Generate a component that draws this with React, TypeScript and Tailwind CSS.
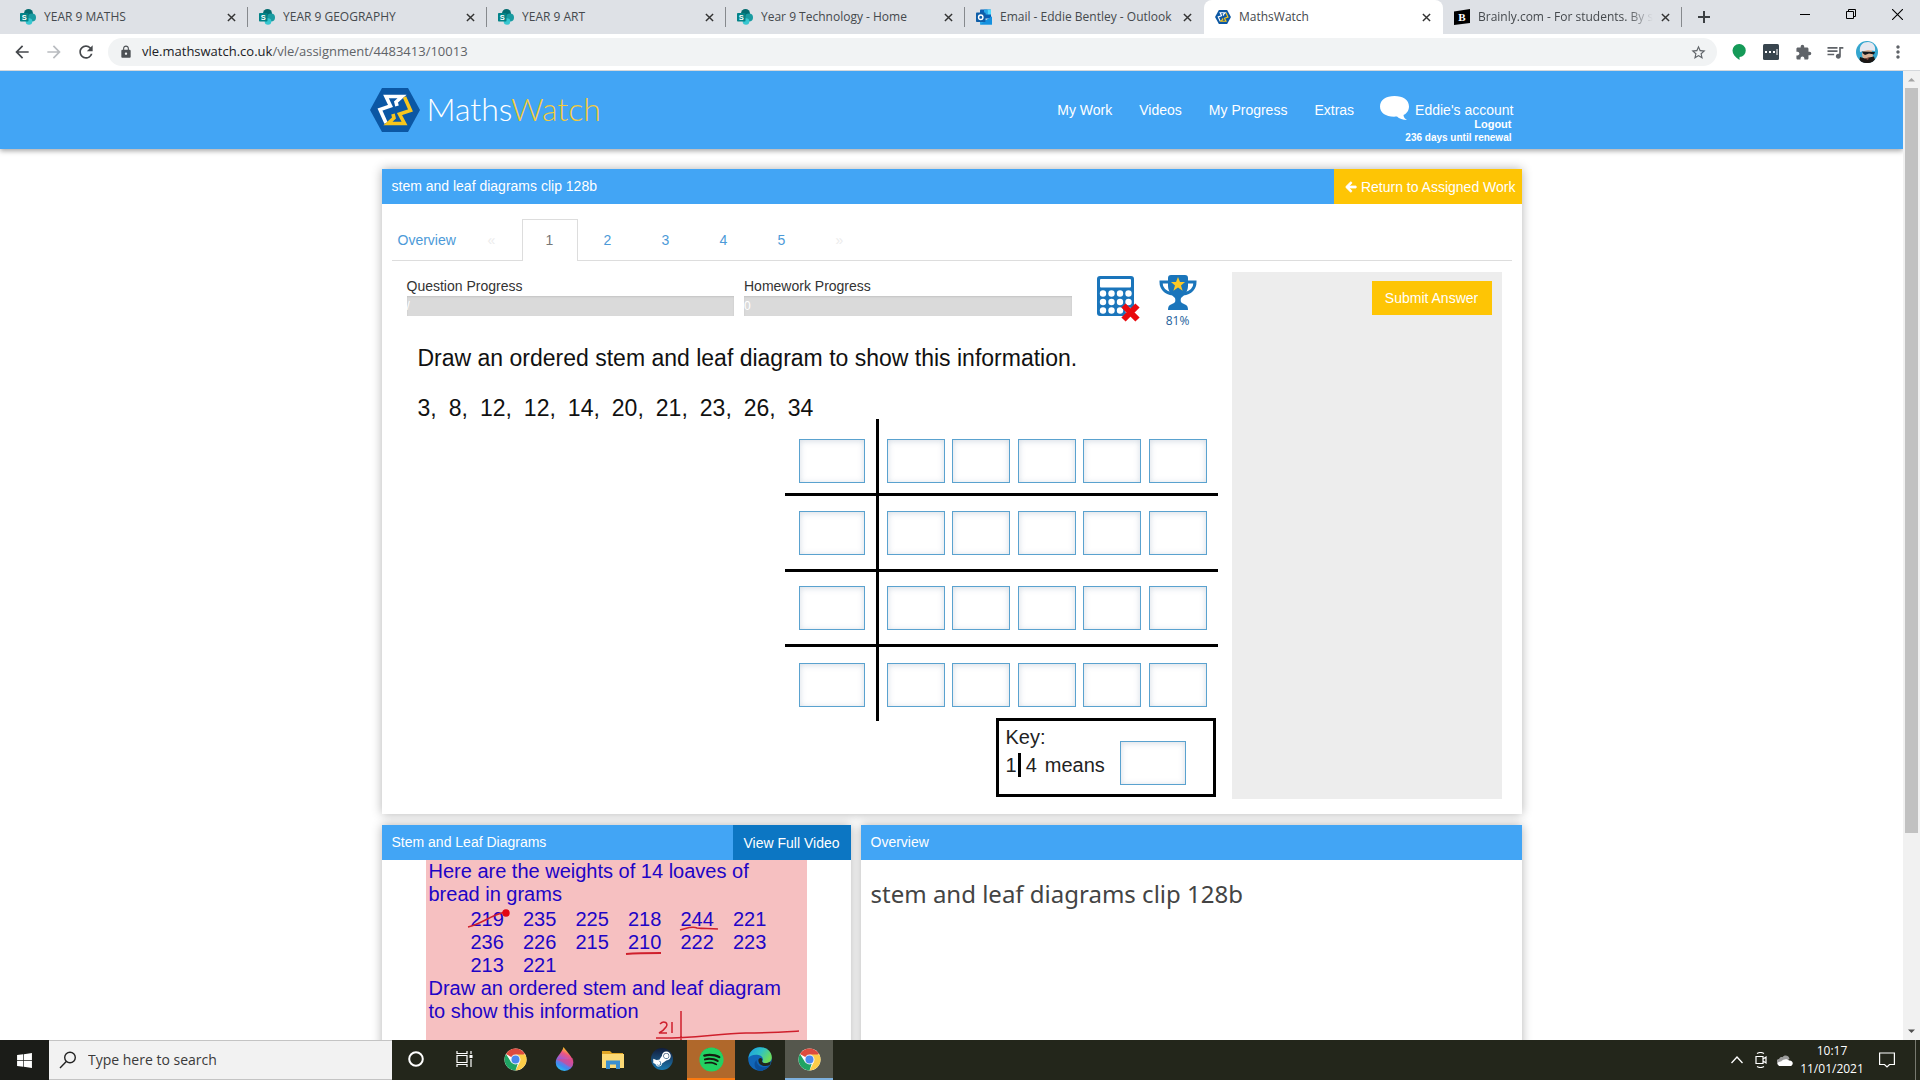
import type { ReactNode } from "react"
import { clsx } from "clsx"
import { FaArrowLeft, FaSpotify, FaSteamSymbol, FaWindows } from "react-icons/fa"
import {
    MdArrowBack,
    MdArrowForward,
    MdExtension,
    MdLock,
    MdMoreVert,
    MdQueueMusic,
    MdRefresh,
    MdStarBorder,
} from "react-icons/md"

type TabIcon = "sharepoint" | "outlook" | "mathswatch" | "brainly"

interface BrowserTab {
    title: string
    icon: TabIcon
    active?: boolean
}

const BROWSER_TABS: BrowserTab[] = [
    { title: "YEAR 9 MATHS", icon: "sharepoint" },
    { title: "YEAR 9 GEOGRAPHY", icon: "sharepoint" },
    { title: "YEAR 9 ART", icon: "sharepoint" },
    { title: "Year 9 Technology - Home", icon: "sharepoint" },
    { title: "Email - Eddie Bentley - Outlook", icon: "outlook" },
    { title: "MathsWatch", icon: "mathswatch", active: true },
    { title: "Brainly.com - For students. By stu", icon: "brainly" },
]

const NAV_LINKS = ["My Work", "Videos", "My Progress", "Extras"]
const DATA_VALUES = ["3,", "8,", "12,", "12,", "14,", "20,", "21,", "23,", "26,", "34"]
const LOAF_WEIGHTS = [219, 235, 225, 218, 244, 221, 236, 226, 215, 210, 222, 223, 213, 221]

// each row of the diagram carries its own padding above and below the boxes
const STEM_ROWS = [
    "h-[77px] pt-5 border-b-[3px]",
    "h-[76px] pt-[15px] border-b-[3px]",
    "h-[75px] pt-[14px] border-b-[3px]",
    "h-[74px] pt-4",
]

/* ---------- icons ---------- */

function MathsWatchMark({ className }: { className?: string }) {
    return (
        <svg viewBox="0 0 50 44" className={className} fill="none">
            <path d="M12 0H38L50 22L38 44H12L0 22Z" fill="#0b57a4" />
            <path d="M16 35L10 21.500L20.500 18L16 8.500H32L26 14L27 18" stroke="#fff" strokeWidth="3.600" />
            <path d="M34.500 9L40.500 22.500L29.500 26L34.500 35.500H18L24 30L23 26" stroke="#f8c61c" strokeWidth="3.600" />
        </svg>
    )
}

function TabGlyph({ icon }: { icon: TabIcon }) {
    if (icon === "sharepoint") {
        return (
            <svg viewBox="0 0 16 16" className="size-4 shrink-0">
                <circle cx="8.500" cy="4.500" r="4.500" fill="#036c70" />
                <circle cx="12" cy="8.500" r="4" fill="#1a9ba1" />
                <circle cx="9" cy="12.500" r="3.300" fill="#37c6d0" />
                <rect x="0" y="4" width="8.500" height="8.500" rx="0.800" fill="#038387" />
                <text x="4.250" y="10.800" fontSize="7.500" fontWeight="700" textAnchor="middle" fill="#fff" fontFamily="Liberation Sans, sans-serif">S</text>
            </svg>
        )
    }
    if (icon === "outlook") {
        return (
            <svg viewBox="0 0 16 16" className="size-4 shrink-0">
                <rect x="4" y="0.500" width="11" height="9" rx="0.800" fill="#0a5fb4" />
                <rect x="8" y="0.500" width="3.500" height="5" fill="#28a8ea" />
                <rect x="11.500" y="0.500" width="3.500" height="5" fill="#50d9ff" />
                <path d="M4 8L10 11L16 7.500V15.500H4Z" fill="#28a8ea" />
                <path d="M4 15.500L16 7.500V15.500Z" fill="#1490df" />
                <rect x="0" y="3.500" width="9.500" height="9.500" rx="0.800" fill="#0f5ea8" />
                <circle cx="4.750" cy="8.250" r="2.200" fill="none" stroke="#fff" strokeWidth="1.400" />
            </svg>
        )
    }
    if (icon === "mathswatch") {
        return <MathsWatchMark className="h-[14px] w-4 shrink-0" />
    }
    return (
        <svg viewBox="0 0 16 16" className="size-4 shrink-0">
            <path d="M0 2.500L16 0V14L0 16Z" fill="#000" />
            <text x="8" y="12" fontSize="11" fontWeight="700" textAnchor="middle" fill="#fff" fontFamily="Liberation Serif, serif">B</text>
        </svg>
    )
}

function CloseX({ className }: { className?: string }) {
    return (
        <svg viewBox="0 0 10 10" className={className} stroke="currentColor" fill="none">
            <path d="M1 1L9 9M9 1L1 9" strokeWidth="1.600" />
        </svg>
    )
}

function ChromeLogo() {
    return (
        <svg viewBox="0 0 48 48" className="size-[23px]">
            <circle cx="24" cy="24" r="23" fill="#fff" />
            <path d="M24 24L4.100 12.500A23 23 0 0 1 43.900 12.500Z" fill="#dd4b3e" />
            <path d="M24 13.500H44.500A23 23 0 0 1 24 47L33 29Z" fill="#fccd48" />
            <path d="M4.100 12.500L15 29.500L28.500 33.500L24 47A23 23 0 0 1 4.100 12.500Z" fill="#1fa463" />
            <circle cx="24" cy="24" r="10.500" fill="#f1f1f1" />
            <circle cx="24" cy="24" r="8.300" fill="#4a88ee" />
        </svg>
    )
}

function PaintDropLogo() {
    return (
        <svg viewBox="0 0 20 26" className="h-6 w-[19px]">
            <defs>
                <linearGradient id="drop" x1="0.700" y1="0" x2="0.300" y2="1">
                    <stop offset="0.080" stopColor="#ffd21e" />
                    <stop offset="0.300" stopColor="#f0567e" />
                    <stop offset="0.550" stopColor="#a75bd0" />
                    <stop offset="0.800" stopColor="#3f8cf0" />
                    <stop offset="1" stopColor="#27c3f3" />
                </linearGradient>
            </defs>
            <path d="M9 0C12 5 19.500 11 19.500 17A9.500 9 0 0 1 0.500 17C0.500 10.500 7 7 9 0Z" fill="url(#drop)" />
            <path d="M1 14C6 11 12 15 19 12C20 16 20 19 17 22C12 20 6 14 1 14Z" fill="#e2457f" opacity="0.550" />
        </svg>
    )
}

function FolderLogo() {
    return (
        <svg viewBox="0 0 22 19" className="h-[19px] w-[22px]">
            <path d="M0 1H8L10 3H21V9H0Z" fill="#e0a526" />
            <path d="M0 4H22V18H0Z" fill="#fcd975" />
            <path d="M4 10.500H18V19H14V14.500H8V19H4Z" fill="#3a8fd0" />
        </svg>
    )
}

function EdgeLogo() {
    return (
        <svg viewBox="0 0 24 24" className="size-6">
            <defs>
                <linearGradient id="edgeTop" x1="0" y1="0" x2="1" y2="0.500">
                    <stop offset="0" stopColor="#1b9de2" />
                    <stop offset="0.550" stopColor="#2fc2c4" />
                    <stop offset="1" stopColor="#6cdc5a" />
                </linearGradient>
            </defs>
            <circle cx="12" cy="12" r="11.800" fill="#1166b8" />
            <path d="M0.500 11C1.500 4.500 6 0.200 12 0.200C19 0.200 23.800 5 23.800 10.500C23.800 14 21 16 18 16C15.500 16 14 15 14.500 14C16 11 13.500 8.500 10.500 8C5.500 7 1.500 9 0.500 11Z" fill="url(#edgeTop)" />
            <path d="M8.500 13C8.500 18 13 21.500 18.500 20C20 19.600 21.500 18.500 22 18C20 21 17 23.800 12 23.800C7 23 5 17 8 13.500Z" fill="#0c4f9a" />
            <path d="M14 14C14 16.500 18.500 17.200 22.600 14.500C22.600 16.500 22.300 17.300 21.500 18.300C16 20.500 9.500 18 10.500 12.500C11 11 13 10.500 13.800 11.500C14.500 12.500 14.500 13 14 14Z" fill="#23261b" />
        </svg>
    )
}

function AvatarPicture() {
    return (
        <svg viewBox="0 0 22 22" className="size-[22px]">
            <clipPath id="face"><circle cx="11" cy="11" r="11" /></clipPath>
            <g clipPath="url(#face)">
                <rect width="22" height="22" fill="#34a6cf" />
                <path d="M3 22C4 17 18 17 20 22Z" fill="#161616" />
                <ellipse cx="11.500" cy="13.500" rx="5.500" ry="6" fill="#d9b196" />
                <path d="M4 11C3 4 7 1 12 1C17 1 20 5 19 10L12 9Z" fill="#e6e8f0" />
                <path d="M6 10.500L19 11L18 13.500L13 12.500L9 14L7 12.500Z" fill="#14161a" />
                <path d="M4 16L9 17.500L13 16.500L18 15.500L20 22H3Z" fill="#1b1715" />
                <path d="M9 17.500L13 16.500L12 19Z" fill="#8a4a3e" />
            </g>
        </svg>
    )
}

function CalculatorCrossed() {
    const columns = [6, 14.500, 23, 31.500]
    const rows = [17.500, 26, 34.500]
    return (
        <svg viewBox="0 0 44 47" className="h-[47px] w-11" role="img" aria-label="Calculator not allowed">
            <rect x="0" y="0" width="37" height="40" rx="3" fill="#1a75bb" />
            <rect x="3" y="3" width="31" height="8.500" rx="1" fill="#fff" />
            {rows.map((cy) => columns.map((cx) => <circle key={`${cx}-${cy}`} cx={cx} cy={cy} r="3.200" fill="#fff" />))}
            <path d="M26.500 29.500L40.500 43.500M40.500 29.500L26.500 43.500" stroke="#e80a0e" strokeWidth="6" />
        </svg>
    )
}

function Trophy() {
    return (
        <svg viewBox="0 0 38 35" className="h-[35px] w-[38px]">
            <path d="M9 7H2C2 13 6 18 14 19M29 7H36C36 13 32 18 24 19" stroke="#1a75bb" strokeWidth="3" fill="none" />
            <path d="M9 3Q9 0 12 0H26Q29 0 29 3V11C29 17 24 21 22 23Q21 27 23 28L27 30Q29 31 29 35H9Q9 31 11 30L15 28Q17 27 16 23C14 21 9 17 9 11Z" fill="#1a75bb" />
            <path d="M19 2L21 7H26L22 10.500L23.600 15.800L19 12.600L14.400 15.800L16 10.500L12 7H17Z" fill="#fcc927" />
        </svg>
    )
}

/* ---------- browser chrome ---------- */

function TabStrip() {
    return (
        <div className="flex h-[34px] shrink-0 items-stretch bg-[#dee1e6] pl-[9px] text-xs text-[#45494d]">
            {BROWSER_TABS.map((tab, i) => (
                <div
                    key={tab.title}
                    className={clsx(
                        "flex w-[239px] min-w-0 items-center gap-2 pl-[11px]",
                        tab.active && "rounded-t-lg bg-white"
                    )}
                >
                    <TabGlyph icon={tab.icon} />
                    <span className={clsx("min-w-0 flex-1 overflow-hidden whitespace-nowrap", i === 6 && "mask-r-from-85%")}>
                        {tab.title}
                    </span>
                    <button aria-label={`Close ${tab.title}`} className="mr-[3px] shrink-0">
                        <CloseX className="size-[9px] text-[#333]" />
                    </button>
                    <div className={clsx("h-5 w-px shrink-0", i === 4 || i === 5 ? "bg-transparent" : "bg-[#86898d]")} />
                </div>
            ))}
            <button aria-label="New tab" className="ml-2 flex w-7 items-center justify-center text-[#3c4043]">
                <svg viewBox="0 0 12 12" className="size-3" stroke="currentColor" strokeWidth="2">
                    <path d="M6 0V12M0 6H12" />
                </svg>
            </button>
            <div className="ml-auto flex h-7 text-black">
                <button aria-label="Minimise" className="flex w-[46px] items-center justify-center">
                    <svg viewBox="0 0 10 10" className="size-[10px]" stroke="currentColor"><path d="M0 5.500H10" /></svg>
                </button>
                <button aria-label="Restore" className="flex w-[46px] items-center justify-center">
                    <svg viewBox="0 0 10 10" className="size-[10px]" stroke="currentColor" fill="none">
                        <path d="M0.500 2.500H7.500V9.500H0.500ZM2.500 2.500V0.500H9.500V7.500H7.500" />
                    </svg>
                </button>
                <button aria-label="Close" className="flex w-[46px] items-center justify-center">
                    <svg viewBox="0 0 10 10" className="size-[11px]" stroke="currentColor"><path d="M0 0L10 10M10 0L0 10" /></svg>
                </button>
            </div>
        </div>
    )
}

function Toolbar() {
    return (
        <div className="flex h-[37px] shrink-0 items-center border-b border-[#d5d8dc] bg-white pr-[17px] text-[#5f6368]">
            <div className="flex items-center gap-3 pl-3">
                <button aria-label="Back"><MdArrowBack size={20} className="text-[#45484c]" /></button>
                <button aria-label="Forward"><MdArrowForward size={20} className="text-[#b9bcc0]" /></button>
                <button aria-label="Reload"><MdRefresh size={20} className="text-[#45484c]" /></button>
            </div>
            <div className="ml-3 flex h-7 flex-1 items-center rounded-full bg-[#f1f3f4] pl-[11px] pr-[10px]">
                <MdLock size={14} className="text-[#4d5155]" />
                <p className="flex-1 pl-[9px] text-[13px]">
                    <span className="text-[#202124]">vle.mathswatch.co.uk</span>/vle/assignment/4483413/10013
                </p>
                <button aria-label="Bookmark this tab"><MdStarBorder size={17} /></button>
            </div>
            <div className="flex items-center pl-[6px]">
                <button aria-label="Hangouts" className="flex w-8 justify-center">
                    <svg viewBox="0 0 14 16" className="h-4 w-[14px]">
                        <path d="M7 0A6.500 6.500 0 0 1 7.500 13V16C3 13 0.500 10 0.500 6.500A6.500 6.500 0 0 1 7 0Z" fill="#159a58" />
                    </svg>
                </button>
                <button aria-label="Extension" className="flex w-8 justify-center">
                    <svg viewBox="0 0 16 16" className="size-4">
                        <rect width="16" height="16" rx="1.500" fill="#38454e" />
                        <path d="M2 7H4V9H2ZM6 7H8V9H6ZM10 7H12V9H10ZM13.500 5H14.500V11H13.500Z" fill="#fff" />
                    </svg>
                </button>
                <button aria-label="Extensions" className="flex w-8 justify-center"><MdExtension size={17} /></button>
                <button aria-label="Media" className="flex w-8 justify-center"><MdQueueMusic size={20} /></button>
                <button aria-label="Profile" className="flex w-8 justify-center"><AvatarPicture /></button>
                <button aria-label="Menu" className="flex w-5 justify-center pl-[10px]"><MdMoreVert size={20} className="shrink-0" /></button>
            </div>
        </div>
    )
}

function Scrollbar() {
    return (
        <div className="flex w-[17px] shrink-0 flex-col items-center bg-[#f1f1f1]">
            <svg viewBox="0 0 17 17" className="size-[17px]"><path d="M5 10.500L8.500 7L12 10.500Z" fill="#a3a3a3" /></svg>
            <div className="w-[13px] flex-[746] bg-[#c1c1c1]" />
            <div className="flex-[190]" />
            <svg viewBox="0 0 17 17" className="size-[17px]"><path d="M5 6.500L8.500 10L12 6.500Z" fill="#505050" /></svg>
        </div>
    )
}

/* ---------- page ---------- */

function SiteHeader() {
    return (
        <header className="h-[78px] bg-[#42a5f5] text-sm text-white shadow-[0_2px_5px_rgba(0,0,0,0.35)]">
            <div className="mx-auto flex h-full w-full max-w-[1170px] items-start pl-[3px] pr-[23px]">
                <a href="#home" className="mt-[17px] flex items-start gap-[7px]">
                    <MathsWatchMark className="h-11 w-[50px]" />
                    <span className="font-['Lato'] text-[32px] font-light leading-[42px]">
                        Maths<span className="text-[#f5cb3a]">Watch</span>
                    </span>
                </a>
                <nav className="ml-auto mt-[29px] flex gap-[27px] leading-5">
                    {NAV_LINKS.map((label) => (
                        <a key={label} href="#nav">{label}</a>
                    ))}
                </nav>
                <div className="ml-[26px] mt-[25px]">
                    <div className="flex items-start justify-end gap-[6px]">
                        <svg viewBox="0 0 29 24" className="h-6 w-[29px]">
                            <path d="M14.500 0C23 0 29 4 29 10.500C29 15 26 18 23.500 19C23.500 21 25 23 27 24C23 24 19 22.500 17 20.500C7 21.500 0 17.500 0 10.500C0 4 6 0 14.500 0Z" fill="#fff" />
                        </svg>
                        <a href="#account" className="mt-1 leading-5">Eddie&apos;s account</a>
                    </div>
                    <div className="-mt-[3px] flex flex-col items-end pr-[2px] text-[11px] font-bold leading-[14px]">
                        <a href="#logout">Logout</a>
                        <span className="text-[10px]">236 days until renewal</span>
                    </div>
                </div>
            </div>
        </header>
    )
}

function Panel({ title, action, className, children }: { title: string; action?: ReactNode; className?: string; children: ReactNode }) {
    return (
        <section className={clsx("bg-white shadow-[0_0_10px_rgba(0,0,0,0.3)]", className)}>
            <div className="flex h-[35px] items-stretch justify-between bg-[#42a5f5] text-sm text-white">
                <h2 className="pl-[10px] leading-[34px]">{title}</h2>
                {action}
            </div>
            {children}
        </section>
    )
}

function QuestionTabs() {
    return (
        <nav className="mx-[10px] mt-[15px] flex h-[42px] items-stretch border-b border-[#ddd] text-sm text-[#4c9ad8]">
            <a href="#overview" className="w-[82px] pl-[6px] leading-[43px]">Overview</a>
            <span className="w-[48px] pl-[14px] leading-[43px] text-[#ececec]">«</span>
            {["1", "2", "3", "4", "5"].map((n) => (
                <a
                    key={n}
                    href="#question"
                    className={clsx(
                        "mr-[2px] w-14 text-center",
                        n === "1" ? "-mb-px border border-b-0 border-[#ddd] bg-white leading-[41px] text-[#777]" : "leading-[43px]"
                    )}
                >
                    {n}
                </a>
            ))}
            <span className="w-14 text-center leading-[43px] text-[#ececec]">»</span>
        </nav>
    )
}

function ProgressMeter({ label, value }: { label: string; value: string }) {
    return (
        <div className="flex-1 text-sm leading-5 text-[#333]">
            <p>{label}</p>
            <div className="h-5 bg-[#dadada] text-xs leading-5 text-white shadow-[inset_0_1px_2px_rgba(0,0,0,0.1)]">{value}</div>
        </div>
    )
}

function AnswerBox({ label, className }: { label: string; className?: string }) {
    return (
        <input
            type="text"
            aria-label={label}
            className={clsx("block h-11 border border-[#5aa2cf] bg-white text-center shadow-[inset_0_1px_6px_rgba(60,90,130,0.22)]", className)}
        />
    )
}

function StemLeafDiagram() {
    return (
        <div className="mr-[14px] w-[433px] self-end pb-[2px]">
            {STEM_ROWS.map((rowClass, r) => (
                <div key={rowClass} className="flex">
                    <div className={clsx("w-[94px] border-r-[3px] border-black pl-[14px]", rowClass)}>
                        <AnswerBox label={`Stem ${r + 1}`} className="w-[66px]" />
                    </div>
                    <div className={clsx("flex flex-1 justify-between border-black pl-2 pr-[11px]", rowClass)}>
                        {[1, 2, 3, 4, 5].map((c) => (
                            <AnswerBox key={c} label={`Row ${r + 1} leaf ${c}`} className="w-[58px]" />
                        ))}
                    </div>
                </div>
            ))}
            <div className="-mt-[3px] ml-auto mr-[2px] flex h-[79px] w-[220px] border-[3px] border-black pl-[7px] text-xl text-[#222]">
                <div className="w-[114px] pt-[2px] leading-7">
                    <p>Key:</p>
                    <p className="flex items-center">
                        1<span className="mx-px h-6 w-[3px] bg-black" />
                        <span className="flex gap-2 pl-1"><span>4</span><span>means</span></span>
                    </p>
                </div>
                <AnswerBox label="Key value" className="mt-5 w-[66px]" />
            </div>
        </div>
    )
}

function AssignmentPanel() {
    return (
        <Panel
            title="stem and leaf diagrams clip 128b"
            className="pb-[15px]"
            action={
                <button className="flex items-center gap-1 bg-[#fec505] pl-[11px] pr-[6px]">
                    <FaArrowLeft size={12} stroke="currentColor" strokeWidth={40} />
                    Return to Assigned Work
                </button>
            }
        >
            <QuestionTabs />
            <div className="mt-[11px] flex pl-[25px] pr-5">
                <div className="flex min-w-0 flex-1 flex-col">
                    <div className="flex h-[72px] pr-[35px] pt-1">
                        <div className="flex flex-1 gap-[10px]">
                            <ProgressMeter label="Question Progress" value="/" />
                            <ProgressMeter label="Homework Progress" value="0" />
                        </div>
                        <div className="ml-[25px]"><CalculatorCrossed /></div>
                        <div className="-mt-px ml-[18px] flex flex-col items-center font-['Open_Sans'] text-xs leading-[22px] text-[#245f9c]">
                            <Trophy />
                            81%
                        </div>
                    </div>
                    <div className="pl-[11px] text-[23px] text-[#111]">
                        <p className="whitespace-nowrap leading-7">Draw an ordered stem and leaf diagram to show this information.</p>
                        <p className="mt-[25px] flex gap-3 leading-[22px]">
                            {DATA_VALUES.map((v, i) => <span key={i}>{v}</span>)}
                        </p>
                    </div>
                    <StemLeafDiagram />
                </div>
                <aside className="w-[270px] bg-[#ededed] pt-[9px]">
                    <button className="ml-auto mr-[10px] block h-[34px] w-[120px] bg-[#fec505] text-sm text-white">Submit Answer</button>
                </aside>
            </div>
        </Panel>
    )
}

function VideoPanel() {
    return (
        <Panel
            title="Stem and Leaf Diagrams"
            className="w-[469px] shrink-0"
            action={<button className="w-[118px] bg-[#0c76c3] text-center">View Full Video</button>}
        >
            <div className="relative mx-auto h-[286px] w-[381px] bg-[#f6c0c1] pl-[3px] text-xl leading-[23px] text-[#2004c6]">
                <p className="whitespace-nowrap">Here are the weights of 14 loaves of</p>
                <p>bread in grams</p>
                <div className="ml-[42px] mt-[2px] grid w-[315px] grid-cols-6">
                    {LOAF_WEIGHTS.map((w, i) => <span key={i}>{w}</span>)}
                </div>
                <p className="whitespace-nowrap">Draw an ordered stem and leaf diagram</p>
                <p>to show this information</p>
                <svg viewBox="0 0 381 286" className="absolute inset-0 size-full" fill="none" stroke="#cf1f2c" strokeWidth="1.500">
                    <path d="M42 67C56 64 64 55 80 52" />
                    <circle cx="80" cy="53" r="3" fill="#e30613" stroke="#e30613" />
                    <path d="M254 70C262 68 266 66 271 68C278 69 284 68 292 69" />
                    <path d="M200 94C212 93 222 93 235 93" strokeWidth="1.800" />
                    <path d="M234 164C238 160 243 163 240 167C238 170 235 172 233 173H241M246 162V173" />
                    <path d="M255 151V286M230 178C260 179 290 174 320 173C340 173 356 172 373 171" />
                </svg>
            </div>
        </Panel>
    )
}

/* ---------- taskbar ---------- */

function TaskButton({ label, className, children }: { label: string; className?: string; children: ReactNode }) {
    return (
        <button aria-label={label} className={clsx("flex h-10 w-12 items-center justify-center border-b-2", className ?? "border-transparent")}>
            {children}
        </button>
    )
}

function Taskbar() {
    return (
        <footer className="flex h-10 shrink-0 items-center bg-[#23261b] text-white">
            <button aria-label="Start" className="flex h-full w-[49px] items-center justify-center bg-[#1b1c18]">
                <FaWindows size={17} />
            </button>
            <label className="flex h-full w-[343px] items-center gap-[11px] border-y border-[#c4c4c4] bg-[#f2f2f2] pl-[10px]">
                <svg viewBox="0 0 18 18" className="size-[18px]" stroke="#222" strokeWidth="1.400" fill="none">
                    <circle cx="11" cy="6.500" r="5.300" />
                    <path d="M7.300 10.500L1 17" />
                </svg>
                <input
                    type="text"
                    aria-label="Search"
                    placeholder="Type here to search"
                    className="w-60 bg-transparent text-sm text-black placeholder:text-[#3a3a3a]"
                />
            </label>
            <TaskButton label="Cortana">
                <svg viewBox="0 0 16 16" className="size-4" fill="none" stroke="#fff" strokeWidth="2"><circle cx="8" cy="8" r="6.800" /></svg>
            </TaskButton>
            <TaskButton label="Task view">
                <svg viewBox="0 0 17 16" className="h-4 w-[17px]" fill="none" stroke="#fff" strokeWidth="1.200">
                    <path d="M1 0V2.500H11V0M1 16V13.500H11V16M1 4.500H11V11.500H1ZM15 0V3M15 8V16" />
                    <path d="M13.500 4H16.500V7H13.500Z" fill="#fff" stroke="none" />
                </svg>
            </TaskButton>
            <div className="ml-[3px] flex gap-px">
                <TaskButton label="Chrome"><ChromeLogo /></TaskButton>
                <TaskButton label="Paint"><PaintDropLogo /></TaskButton>
                <TaskButton label="File Explorer"><FolderLogo /></TaskButton>
                <TaskButton label="Steam">
                    <span className="flex size-[22px] items-center justify-center rounded-full bg-linear-to-b from-[#101d3c] to-[#1879b0]">
                        <FaSteamSymbol size={20} />
                    </span>
                </TaskButton>
                <TaskButton label="Spotify" className="border-[#fa7a10] bg-[#b0682b]">
                    <span className="flex size-[23px] items-center justify-center rounded-full bg-[#141c10]">
                        <FaSpotify size={25} className="shrink-0 text-[#23d162]" />
                    </span>
                </TaskButton>
                <TaskButton label="Edge"><EdgeLogo /></TaskButton>
                <TaskButton label="Chrome window" className="border-[#7db0de] bg-[#55574d]"><ChromeLogo /></TaskButton>
            </div>
            <div className="ml-auto flex h-full items-center">
                <button aria-label="Show hidden icons" className="flex w-6 justify-center">
                    <svg viewBox="0 0 12 8" className="h-2 w-3" fill="none" stroke="#fff" strokeWidth="1.300"><path d="M0.500 7L6 1L11.500 7" /></svg>
                </button>
                <button aria-label="Meet now" className="flex w-6 justify-center">
                    <svg viewBox="0 0 12 16" className="h-4 w-3" fill="none" stroke="#fff" strokeWidth="1.200">
                        <path d="M1 4.500H8V11.500H1ZM8 7L11 5V11L8 9M2 1.500C4 0.300 7 0.300 9 1.500M2 14.500C4 15.700 7 15.700 9 14.500" />
                    </svg>
                </button>
                <button aria-label="OneDrive" className="flex w-6 justify-center">
                    <svg viewBox="0 0 16 11" className="h-[11px] w-4">
                        <path d="M3 10A3 3 0 0 1 2 4C3 2 5 2 5.500 2.200C7 -0.500 12 0 12.500 4Z" fill="#9b9b9b" />
                        <path d="M2 11C-0.500 9 1 6.500 4 6.500C7 3 11 4 12 5.500C16 5 17 9.500 14 11Z" fill="#fff" />
                    </svg>
                </button>
                <div className="w-[70px] text-center text-xs leading-[18px]">
                    <p>10:17</p>
                    <p>11/01/2021</p>
                </div>
                <button aria-label="Notifications" className="ml-[12px] mr-5 flex">
                    <svg viewBox="0 0 16 16" className="size-4" fill="none" stroke="#fff" strokeWidth="1.200">
                        <path d="M0.600 1H15.400V12.500H10.500L8 15L5.500 12.500H0.600Z" />
                    </svg>
                </button>
                <div className="mr-1 h-full w-px bg-[#77796f]" />
            </div>
        </footer>
    )
}

export default function App() {
    return (
        <div className="flex h-screen flex-col overflow-hidden bg-white font-['Open_Sans',sans-serif]">
            <TabStrip />
            <Toolbar />
            <div className="flex min-h-0 flex-1">
                <div className="min-w-0 flex-1 overflow-hidden font-['Liberation_Sans',sans-serif]">
                    <SiteHeader />
                    <main className="mx-auto w-full max-w-[1140px] pt-5">
                        <AssignmentPanel />
                        <div className="mt-[11px] flex items-stretch gap-[10px]">
                            <VideoPanel />
                            <Panel title="Overview" className="min-w-0 flex-1">
                                <p className="pl-[10px] pt-4 font-['Noto_Sans'] text-2xl leading-9 text-[#444]">stem and leaf diagrams clip 128b</p>
                            </Panel>
                        </div>
                    </main>
                </div>
                <Scrollbar />
            </div>
            <Taskbar />
        </div>
    )
}
